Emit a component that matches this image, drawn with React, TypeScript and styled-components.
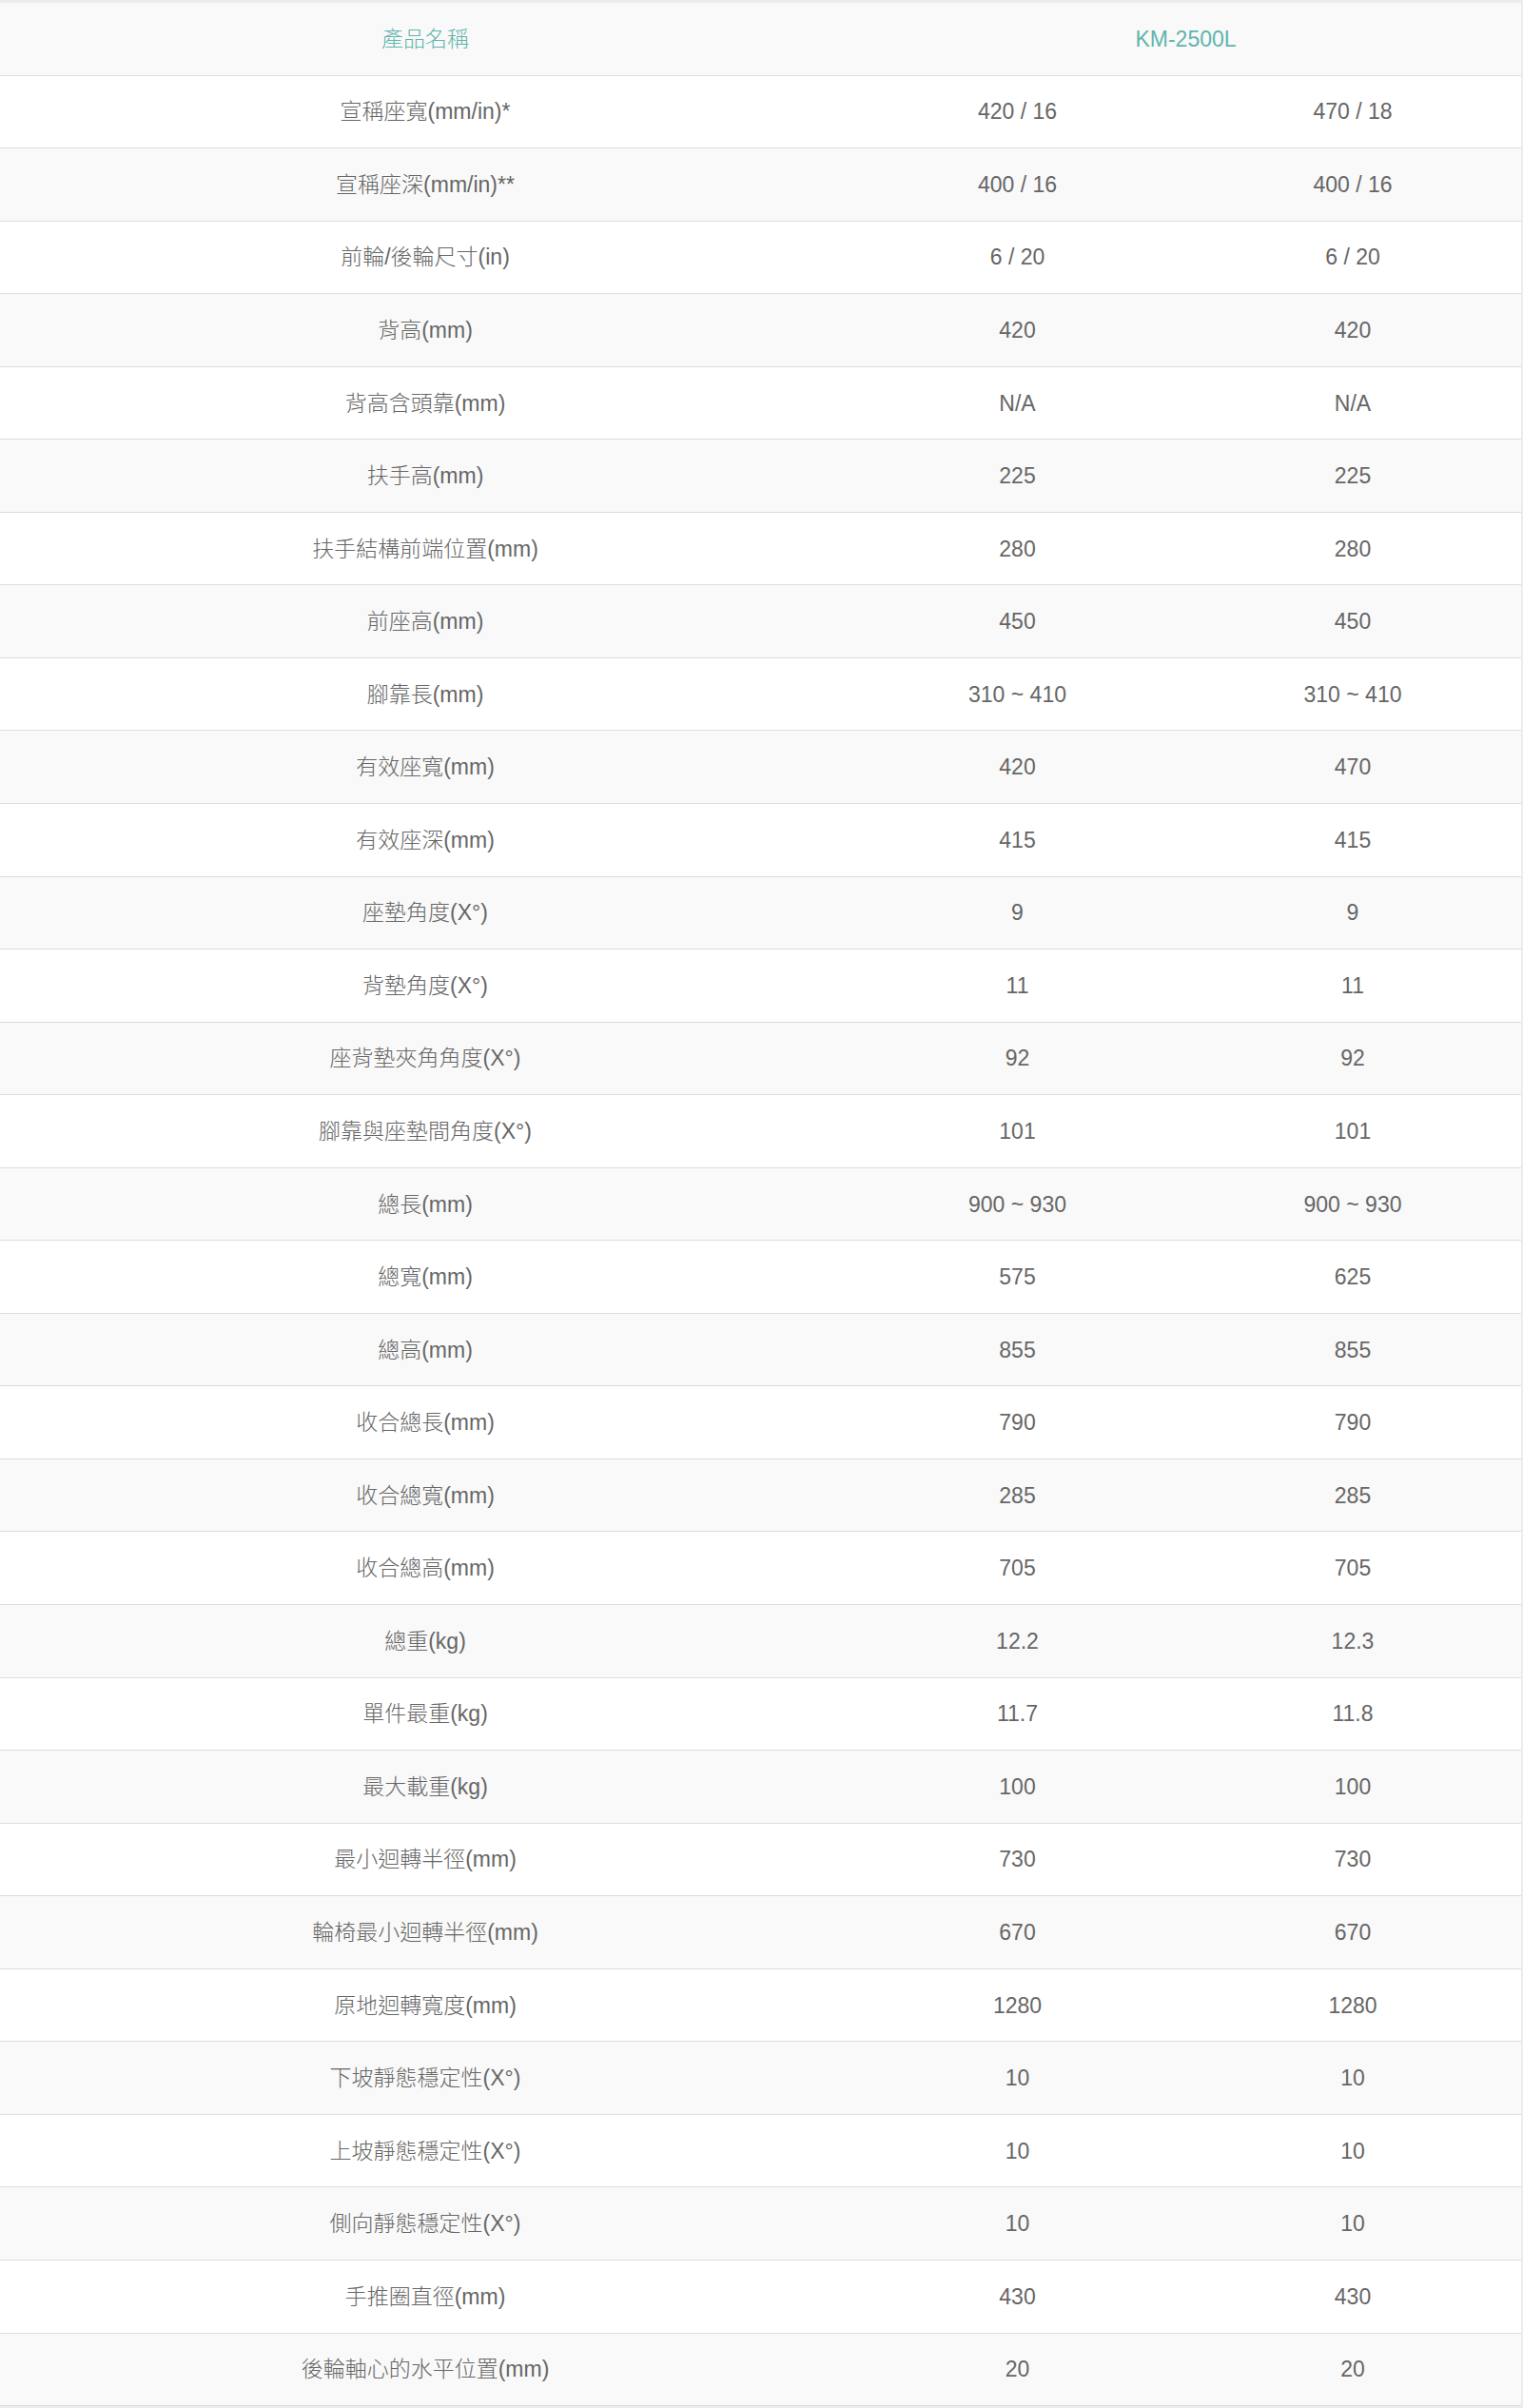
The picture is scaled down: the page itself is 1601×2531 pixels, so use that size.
import styled, { createGlobalStyle } from 'styled-components'

const GlobalStyle = createGlobalStyle`
  html, body {
    margin: 0;
    padding: 0;
    background: #ececec;
  }
  body {
    font-family: "Liberation Sans", Arial, "Noto Sans CJK TC", sans-serif;
  }
`

// spec rows: label, left value, right value
const specs: [string, string, string][] = [
  ['宣稱座寬(mm/in)*', '420 / 16', '470 / 18'],
  ['宣稱座深(mm/in)**', '400 / 16', '400 / 16'],
  ['前輪/後輪尺寸(in)', '6 / 20', '6 / 20'],
  ['背高(mm)', '420', '420'],
  ['背高含頭靠(mm)', 'N/A', 'N/A'],
  ['扶手高(mm)', '225', '225'],
  ['扶手結構前端位置(mm)', '280', '280'],
  ['前座高(mm)', '450', '450'],
  ['腳靠長(mm)', '310 ~ 410', '310 ~ 410'],
  ['有效座寬(mm)', '420', '470'],
  ['有效座深(mm)', '415', '415'],
  ['座墊角度(X°)', '9', '9'],
  ['背墊角度(X°)', '11', '11'],
  ['座背墊夾角角度(X°)', '92', '92'],
  ['腳靠與座墊間角度(X°)', '101', '101'],
  ['總長(mm)', '900 ~ 930', '900 ~ 930'],
  ['總寬(mm)', '575', '625'],
  ['總高(mm)', '855', '855'],
  ['收合總長(mm)', '790', '790'],
  ['收合總寬(mm)', '285', '285'],
  ['收合總高(mm)', '705', '705'],
  ['總重(kg)', '12.2', '12.3'],
  ['單件最重(kg)', '11.7', '11.8'],
  ['最大載重(kg)', '100', '100'],
  ['最小迴轉半徑(mm)', '730', '730'],
  ['輪椅最小迴轉半徑(mm)', '670', '670'],
  ['原地迴轉寬度(mm)', '1280', '1280'],
  ['下坡靜態穩定性(X°)', '10', '10'],
  ['上坡靜態穩定性(X°)', '10', '10'],
  ['側向靜態穩定性(X°)', '10', '10'],
  ['手推圈直徑(mm)', '430', '430'],
  ['後輪軸心的水平位置(mm)', '20', '20'],
]

const SpecTable = styled.div`
  width: 1599px;
  margin-top: 3px;
  background: #fff;
`

const Row = styled.div<{ $shaded?: boolean }>`
  display: grid;
  grid-template-columns: 894px 351px 1fr;
  height: 75.55px;
  border-bottom: 1px solid #dddddd;
  background: ${(p) => (p.$shaded ? '#f9f9f9' : '#ffffff')};
`

const Cell = styled.div<{ $span?: number }>`
  grid-column: span ${(p) => p.$span ?? 1};
  display: flex;
  align-items: center;
  justify-content: center;
  font-size: 23px;
  line-height: 32px;
  font-weight: 300;
  color: #666666;
  white-space: nowrap;
`

const HeadCell = styled(Cell)`
  color: #5fb5ad;
`

export default function App() {
  return (
    <>
      <GlobalStyle />
      <SpecTable>
        <Row $shaded>
          <HeadCell>產品名稱</HeadCell>
          <HeadCell $span={2}>KM-2500L</HeadCell>
        </Row>
        {specs.map(([label, a, b], i) => (
          <Row key={label} $shaded={i % 2 === 1}>
            <Cell>{label}</Cell>
            <Cell>{a}</Cell>
            <Cell>{b}</Cell>
          </Row>
        ))}
      </SpecTable>
    </>
  )
}
